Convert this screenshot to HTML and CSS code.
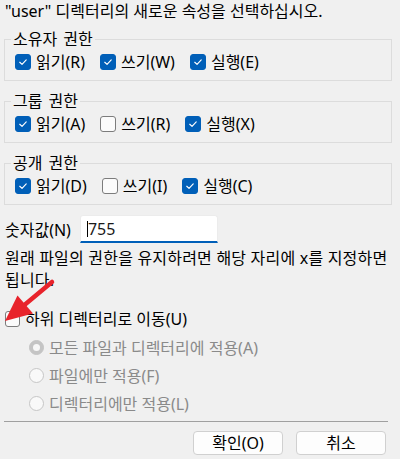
FILE: index.html
```html
<!DOCTYPE html>
<html lang="ko">
<head>
<meta charset="utf-8">
<title>권한 변경</title>
<link rel="stylesheet" href="styles.css">
</head>
<body>
<div class="dialog">
  <p class="title">"user" 디렉터리의 새로운 속성을 선택하십시오.</p>

  <fieldset class="group">
    <legend>소유자 권한</legend>
    <div class="row">
      <label class="check"><span class="box on"><svg viewBox="0 0 16 16"><path d="M4.3 8.3 L6.9 10.8 L11.7 5.6"/></svg></span>읽기(R)</label>
      <label class="check"><span class="box on"><svg viewBox="0 0 16 16"><path d="M4.3 8.3 L6.9 10.8 L11.7 5.6"/></svg></span>쓰기(W)</label>
      <label class="check"><span class="box on"><svg viewBox="0 0 16 16"><path d="M4.3 8.3 L6.9 10.8 L11.7 5.6"/></svg></span>실행(E)</label>
    </div>
  </fieldset>

  <fieldset class="group">
    <legend>그룹 권한</legend>
    <div class="row">
      <label class="check"><span class="box on"><svg viewBox="0 0 16 16"><path d="M4.3 8.3 L6.9 10.8 L11.7 5.6"/></svg></span>읽기(A)</label>
      <label class="check"><span class="box"></span>쓰기(R)</label>
      <label class="check"><span class="box on"><svg viewBox="0 0 16 16"><path d="M4.3 8.3 L6.9 10.8 L11.7 5.6"/></svg></span>실행(X)</label>
    </div>
  </fieldset>

  <fieldset class="group">
    <legend>공개 권한</legend>
    <div class="row">
      <label class="check"><span class="box on"><svg viewBox="0 0 16 16"><path d="M4.3 8.3 L6.9 10.8 L11.7 5.6"/></svg></span>읽기(D)</label>
      <label class="check"><span class="box"></span>쓰기(I)</label>
      <label class="check"><span class="box on"><svg viewBox="0 0 16 16"><path d="M4.3 8.3 L6.9 10.8 L11.7 5.6"/></svg></span>실행(C)</label>
    </div>
  </fieldset>

  <div class="numrow">
    <span class="numlabel">숫자값(N)</span>
    <div class="field"><span class="caret"></span>755</div>
  </div>

  <p class="note">원래 파일의 권한을 유지하려면 해당 자리에 x를 지정하면 됩니다.</p>

  <label class="check recurse"><span class="box"></span>하위 디렉터리로 이동(U)</label>

  <div class="radios">
    <div class="radio"><span class="dot on"></span>모든 파일과 디렉터리에 적용(A)</div>
    <div class="radio"><span class="dot"></span>파일에만 적용(F)</div>
    <div class="radio"><span class="dot"></span>디렉터리에만 적용(L)</div>
  </div>

  <hr class="sep">

  <div class="buttons">
    <button class="btn">확인(O)</button>
    <button class="btn">취소</button>
  </div>

  <svg class="arrow" width="60" height="60" viewBox="0 0 60 60">
    <line x1="52" y1="12" x2="22" y2="37" stroke="#e8232b" stroke-width="4.5" stroke-linecap="round"/>
    <polygon points="5,51 17.5,25.5 33,43.5" fill="#e8232b"/>
  </svg>
</div>
</body>
</html>
```

FILE: styles.css
```css
* { box-sizing: border-box; }

html, body {
  margin: 0;
  padding: 0;
  background: #f0f0f0;
}

body {
  font-family: "Noto Sans", "Noto Sans CJK KR", sans-serif;
  font-size: 16px;
  color: #000;
}

.dialog {
  position: relative;
  width: 400px;
  height: 459px;
  padding: 1px 8px 0 4px;
}

.title {
  margin: 0;
  line-height: 20px;
  padding-left: 1px;
}

.group {
  margin: 10px 0 0 0;
  padding: 7px 10px 10px 10px;
  border: 1px solid #dcdcdc;
  min-inline-size: 0;
}

.group + .group { margin-top: 12px; }

.group legend {
  padding: 0 2px;
  margin-left: -4px;
  line-height: 16px;
  word-spacing: 2px;
}

.row {
  display: flex;
  gap: 15px;
  height: 16px;
  align-items: center;
}

.check {
  display: inline-flex;
  align-items: center;
  gap: 5px;
  line-height: 16px;
  white-space: nowrap;
}

.box {
  width: 16px;
  height: 16px;
  border-radius: 3px;
  border: 1px solid #7c7c7c;
  background: #fbfbfb;
  display: inline-block;
  flex: none;
}

.box.on {
  background: #005fb8;
  border-color: #005fb8;
}

.box svg {
  display: block;
  width: 14px;
  height: 14px;
}

.box svg path {
  fill: none;
  stroke: #fff;
  stroke-width: 1.3;
  stroke-linecap: round;
  stroke-linejoin: round;
}

.numrow {
  margin-top: 10px;
  display: flex;
  align-items: center;
  gap: 9px;
  height: 28px;
}

.numlabel { padding-left: 1px; }

.field {
  width: 138px;
  height: 28px;
  background: #fff;
  border: 1px solid #ececec;
  border-bottom: 2px solid #005fb8;
  border-radius: 3px 3px 0 0;
  display: flex;
  align-items: center;
  padding-left: 6px;
  color: #1a1a1a;
}

.caret {
  width: 1px;
  height: 16px;
  background: #000;
}

.note {
  margin: 4px 0 0 0;
  line-height: 22px;
  padding-left: 1px;
  letter-spacing: 0.2px;
}

.recurse {
  margin-top: 20px;
  display: flex;
  padding-left: 1px;
}

.recurse .box { width: 15px; height: 16px; }

.radios {
  margin-top: 6px;
  padding-left: 25px;
  color: #8a8a8a;
}

.radio {
  display: flex;
  align-items: center;
  gap: 5px;
  height: 28px;
}

.dot {
  width: 15px;
  height: 15px;
  border-radius: 50%;
  border: 1px solid #c6c6c6;
  background: #f9f9f9;
  flex: none;
  display: flex;
  align-items: center;
  justify-content: center;
}

.dot.on {
  background: #c4c4c4;
  border-color: #c4c4c4;
}

.dot.on::after {
  content: "";
  width: 7px;
  height: 7px;
  border-radius: 50%;
  background: #f7f7f7;
}

.sep {
  margin: 4px 4px 0 0;
  border: 0;
  border-top: 1px solid #a0a0a0;
  height: 0;
}

.buttons {
  margin-top: 9px;
  display: flex;
  justify-content: flex-end;
  gap: 13px;
  padding-right: 6px;
}

.btn {
  width: 90px;
  height: 24px;
  font: inherit;
  color: #000;
  background: #fdfdfd;
  border: 1px solid #d0d0d0;
  border-radius: 4px;
  padding: 0;
  line-height: 20px;
}

.arrow {
  position: absolute;
  left: 0;
  top: 270px;
}
```
